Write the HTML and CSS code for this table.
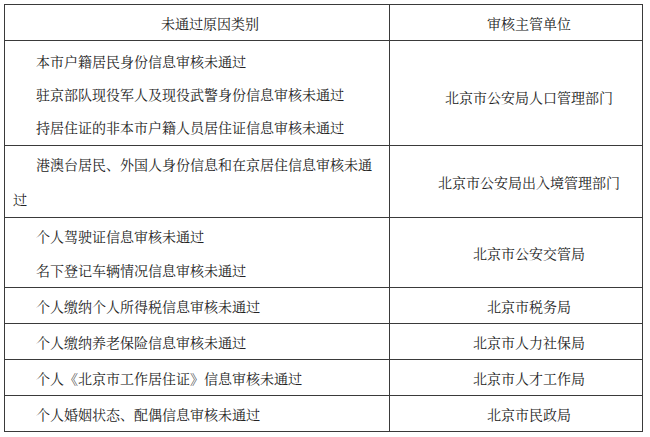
FILE: index.html
```html
<!DOCTYPE html>
<html lang="zh-CN">
<head>
<meta charset="utf-8">
<title>未通过原因类别</title>
<link rel="stylesheet" href="styles.css">
</head>
<body>
<table class="grid">
  <colgroup>
    <col class="col-reason">
    <col class="col-unit">
  </colgroup>
  <thead>
    <tr class="row-std">
      <th class="cell center">未通过原因类别</th>
      <th class="cell center">审核主管单位</th>
    </tr>
  </thead>
  <tbody>
    <tr class="row-a">
      <td class="cell left lines-a">
        <p class="line">本市户籍居民身份信息审核未通过</p>
        <p class="line">驻京部队现役军人及现役武警身份信息审核未通过</p>
        <p class="line">持居住证的非本市户籍人员居住证信息审核未通过</p>
      </td>
      <td class="cell center shift-a">北京市公安局人口管理部门</td>
    </tr>
    <tr class="row-b">
      <td class="cell left lines-b">
        <p class="line">港澳台居民、外国人身份信息和在京居住信息审核未通过</p>
      </td>
      <td class="cell center">北京市公安局出入境管理部门</td>
    </tr>
    <tr class="row-c">
      <td class="cell left lines-c">
        <p class="line">个人驾驶证信息审核未通过</p>
        <p class="line">名下登记车辆情况信息审核未通过</p>
      </td>
      <td class="cell center">北京市公安交管局</td>
    </tr>
    <tr class="row-std">
      <td class="cell left">个人缴纳个人所得税信息审核未通过</td>
      <td class="cell center">北京市税务局</td>
    </tr>
    <tr class="row-std">
      <td class="cell left">个人缴纳养老保险信息审核未通过</td>
      <td class="cell center">北京市人力社保局</td>
    </tr>
    <tr class="row-std">
      <td class="cell left">个人《北京市工作居住证》信息审核未通过</td>
      <td class="cell center">北京市人才工作局</td>
    </tr>
    <tr class="row-std">
      <td class="cell left">个人婚姻状态、配偶信息审核未通过</td>
      <td class="cell center">北京市民政局</td>
    </tr>
  </tbody>
</table>
</body>
</html>
```

FILE: styles.css
```css
html, body {
  margin: 0;
  padding: 0;
  background: #ffffff;
}

body {
  padding: 4px;
  font-family: "Noto Serif CJK SC", "Noto Sans CJK SC", serif;
  font-size: 14px;
  color: #222222;
}

.grid {
  border-collapse: collapse;
  table-layout: fixed;
  width: 638px;
}

.col-reason { width: 385px; }
.col-unit { width: 253px; }

.cell {
  border: 1px solid #3a3a3a;
  padding: 0 8px;
  vertical-align: middle;
  font-weight: 400;
  line-height: 20px;
}

.center {
  text-align: center;
  text-indent: 26px;
}

.left {
  text-align: left;
  text-indent: 23px;
}

.line {
  margin: 0;
}

.row-std { height: 36px; }
.row-a { height: 105px; }
.row-b { height: 72px; }
.row-c { height: 70px; }

.lines-a { line-height: 33px; padding-top: 3px; }
.lines-b { line-height: 35px; padding-top: 1px; }
.lines-c { line-height: 34px; padding-top: 1px; }

.shift-a { padding-top: 8px; }
```
